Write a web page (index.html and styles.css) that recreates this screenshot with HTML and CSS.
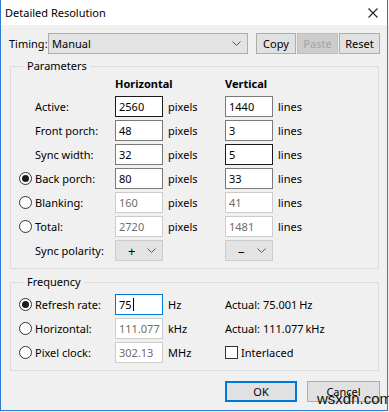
FILE: index.html
```html
<!DOCTYPE html>
<html>
<head>
<meta charset="utf-8">
<link rel="stylesheet" href="styles.css">
</head>
<body>
<div class="window">
  <div class="titlebar">
    <span class="title">Detailed Resolution</span>
    <svg class="close" width="10" height="10" viewBox="0 0 10 10"><path d="M0.5 0.5 L9.5 9.5 M9.5 0.5 L0.5 9.5" stroke="#222" stroke-width="1.1" fill="none"/></svg>
  </div>
  <div class="content">
    <div class="timing-row">
      <span class="timing-label">Timing:</span>
      <div class="combo timing-combo"><span>Manual</span><svg class="chev" width="9" height="5" viewBox="0 0 9 5"><path d="M0.5 0.5 L4.5 4.5 L8.5 0.5" stroke="#555" fill="none"/></svg></div>
      <div class="btn copy">Copy</div>
      <div class="btn paste disabled">Paste</div>
      <div class="btn reset">Reset</div>
    </div>

    <fieldset class="group params">
      <legend>Parameters</legend>
      <div class="grid pgrid">
        <span></span><span></span><span class="hdr">Horizontal</span><span></span><span class="hdr">Vertical</span><span></span>

        <span></span><span class="lbl">Active:</span><span class="field dark">2560</span><span class="unit">pixels</span><span class="field">1440</span><span class="unit">lines</span>

        <span></span><span class="lbl">Front porch:</span><span class="field">48</span><span class="unit">pixels</span><span class="field">3</span><span class="unit">lines</span>

        <span></span><span class="lbl">Sync width:</span><span class="field">32</span><span class="unit">pixels</span><span class="field dark">5</span><span class="unit">lines</span>

        <span class="radio checked"></span><span class="lbl">Back porch:</span><span class="field">80</span><span class="unit">pixels</span><span class="field">33</span><span class="unit">lines</span>

        <span class="radio"></span><span class="lbl">Blanking:</span><span class="field dis">160</span><span class="unit">pixels</span><span class="field dis">41</span><span class="unit">lines</span>

        <span class="radio"></span><span class="lbl">Total:</span><span class="field dis">2720</span><span class="unit">pixels</span><span class="field dis">1481</span><span class="unit">lines</span>

        <span></span><span class="lbl">Sync polarity:</span><div class="combo pol"><span class="sign">+</span><svg class="chev" width="9" height="5" viewBox="0 0 9 5"><path d="M0.5 0.5 L4.5 4.5 L8.5 0.5" stroke="#555" fill="none"/></svg></div><span></span><div class="combo pol"><span class="sign">&ndash;</span><svg class="chev" width="9" height="5" viewBox="0 0 9 5"><path d="M0.5 0.5 L4.5 4.5 L8.5 0.5" stroke="#555" fill="none"/></svg></div><span></span>
      </div>
    </fieldset>

    <fieldset class="group freq">
      <legend>Frequency</legend>
      <div class="grid fgrid">
        <span class="radio checked"></span><span class="lbl">Refresh rate:</span><span class="field focus">75<span class="caret"></span></span><span class="unit">Hz</span><span class="actual">Actual: 75.001&#8201;Hz</span>

        <span class="radio"></span><span class="lbl">Horizontal:</span><span class="field dis">111.077</span><span class="unit">kHz</span><span class="actual">Actual: 111.077&#8201;kHz</span>

        <span class="radio"></span><span class="lbl">Pixel clock:</span><span class="field dis">302.13</span><span class="unit">MHz</span><span class="check-wrap"><span class="checkbox"></span><span>Interlaced</span></span>
      </div>
    </fieldset>

    <div class="actions">
      <div class="btn ok">OK</div>
      <div class="btn cancel">Cancel</div>
    </div>
  </div>
  <span class="watermark">wsxdn.com</span>
</div>
</body>
</html>
```

FILE: styles.css
```css
* { box-sizing: border-box; }
html, body {
  margin: 0;
  padding: 0;
  background: #f0f0f0;
}
body {
  width: 389px;
  height: 412px;
  overflow: hidden;
  font-family: "Noto Sans", "Open Sans", sans-serif;
  font-size: 11px;
  color: #000;
}
.window {
  position: relative;
  width: 388px;
  height: 411px;
  border-left: 1px solid #2b79d0;
  border-right: 1px solid #2b79d0;
  border-bottom: 1px solid #2b79d0;
  background: #f0f0f0;
}
.titlebar {
  height: 25px;
  background: #fff;
  display: flex;
  align-items: center;
  justify-content: space-between;
  padding: 0 9px 0 4px;
}
.title {
  font-size: 11px;
  line-height: 14px;
}
.close { display: block; margin-top: 1px; }
.content {
  padding: 8px 0 0 8px;
}
.timing-row {
  display: flex;
  align-items: center;
  height: 21px;
}
.timing-label { width: 39px; }
.combo {
  display: flex;
  align-items: center;
  justify-content: space-between;
  height: 21px;
  background: #e3e3e3;
  border: 1px solid #adadad;
}
.timing-combo {
  width: 200px;
  padding: 0 6px 0 3px;
  margin-right: 8px;
}
.chev { display: block; }
.btn {
  display: flex;
  align-items: center;
  justify-content: center;
  height: 21px;
  background: #e1e1e1;
  border: 1px solid #adadad;
}
.copy { width: 40px; margin-right: 1px; }
.paste { width: 41px; margin-right: 1px; }
.reset { width: 41px; }
.disabled {
  background: #cccccc;
  border-color: #bfbfbf;
  color: #a3a3a3;
}
.group {
  margin: 0 0 0 1px;
  width: 369px;
  border: 1px solid #dcdcdc;
  padding: 0 0 0 8px;
  min-width: 0;
}
.group legend {
  padding: 0 3px;
  margin-left: 5px;
  line-height: 14px;
}
.params {
  margin-top: 5px;
  padding-top: 3px;
  padding-bottom: 7px;
}
.freq {
  margin-top: 6px;
  padding-top: 5px;
  padding-bottom: 7px;
}
.grid {
  display: grid;
  align-items: center;
  row-gap: 3px;
}
.pgrid {
  grid-template-columns: 16px 80px 48px 62px 48px auto;
  grid-template-rows: 17px repeat(7, 21px);
}
.fgrid {
  grid-template-columns: 16px 80px 48px 62px auto;
  grid-template-rows: repeat(3, 21px);
}
.hdr {
  font-weight: bold;
  font-size: 11px;
  align-self: start;
}
.field {
  height: 21px;
  display: flex;
  align-items: center;
  padding-left: 3px;
  background: #fff;
  border: 1px solid #7a7a7a;
}
.field.dark { border-color: #1a1a1a; }
.field.focus { border-color: #0078d7; }
.field.dis {
  border-color: #cccccc;
  color: #6d6d6d;
}
.caret {
  display: inline-block;
  width: 1px;
  height: 13px;
  background: #000;
  margin-left: 1px;
}
.unit { padding-left: 5px; }
.radio {
  width: 13px;
  height: 13px;
  border: 1px solid #333;
  border-radius: 50%;
  background: #fff;
  display: flex;
  align-items: center;
  justify-content: center;
}
.radio.checked::after {
  content: "";
  width: 7px;
  height: 7px;
  border-radius: 50%;
  background: #1a1a1a;
}
.pol {
  width: 48px;
  background: #e3e3e3;
  border-color: #cccccc;
  padding: 0 6px 0 12px;
}
.sign { font-size: 13px; }
.check-wrap {
  display: flex;
  align-items: center;
  gap: 3px;
}
.checkbox {
  width: 13px;
  height: 13px;
  border: 1px solid #333;
  background: #fff;
}
.actions {
  display: flex;
  gap: 10px;
  margin: 10px 0 0 216px;
}
.ok {
  width: 72px;
  border: 2px solid #0078d7;
  background: #e1e1e1;
}
.cancel {
  width: 73px;
}
.watermark {
  position: absolute;
  left: 316px;
  top: 391px;
  font-family: "Liberation Sans", Arial, sans-serif;
  font-size: 15px;
  color: #111;
  line-height: 16px;
}
```
